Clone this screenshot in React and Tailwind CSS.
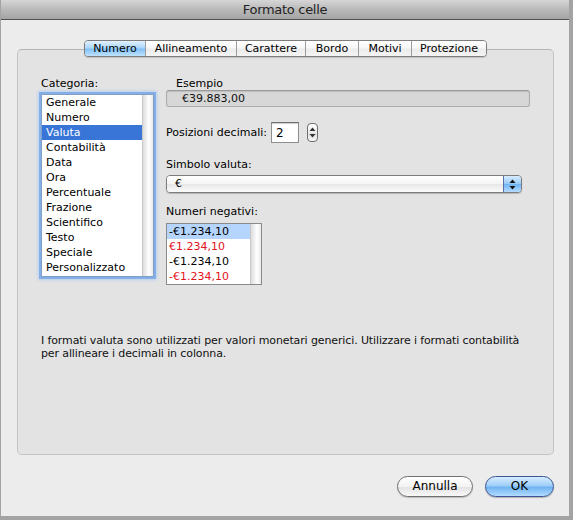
import React from 'react';

const tabs = [
  { label: 'Numero', w: 'w-[60px]', active: true },
  { label: 'Allineamento', w: 'w-[91px]' },
  { label: 'Carattere', w: 'w-[69px]' },
  { label: 'Bordo', w: 'w-[53px]' },
  { label: 'Motivi', w: 'w-[53px]' },
  { label: 'Protezione', w: 'w-[75px]' },
];

const categories = [
  'Generale', 'Numero', 'Valuta', 'Contabilità', 'Data', 'Ora',
  'Percentuale', 'Frazione', 'Scientifico', 'Testo', 'Speciale', 'Personalizzato',
];

const negatives = [
  { text: '-€1.234,10', red: false, sel: true },
  { text: '€1.234,10', red: true },
  { text: '-€1.234,10', red: false },
  { text: '-€1.234,10', red: true },
];

const UpDown = ({ className = '' }) => (
  <svg width="7" height="11" viewBox="0 0 7 11" className={className}>
    <path d="M3.5 0.5 L6.5 4 L0.5 4 Z" fill="currentColor" />
    <path d="M3.5 10.5 L6.5 7 L0.5 7 Z" fill="currentColor" />
  </svg>
);

const Track = () => (
  <div className="w-[11px] self-stretch border-l border-[#c9c9c9] bg-[linear-gradient(to_right,#dcdcdc,#f7f7f7_45%,#ffffff_60%,#e9e9e9)]" />
);

export default function App() {
  return (
    <div className="w-[573px] h-[520px] bg-[#a3a3a3] font-['DejaVu_Sans',Verdana,sans-serif] text-[11px] text-black overflow-hidden">
      <div className="ml-[1px] w-[568px] h-[516px] flex flex-col bg-[#ececec]">
        {/* title bar */}
        <div className="h-[20px] shrink-0 border-b border-[#515151] bg-[linear-gradient(to_bottom,#d6d6d6,#b9b9b9_50%,#a4a4a4)] flex items-center justify-center">
          <span className="text-[13px] leading-[19px] text-[#222] tracking-[-0.3px]">Formato celle</span>
        </div>

        <div className="flex flex-col pl-[16px] pr-[15px]">
          {/* tabs */}
          <div className="relative z-10 mt-[20px] flex justify-center">
            <div className="flex h-[17px] rounded-[4px] border border-[#7d7d7d] overflow-hidden shadow-[0_1px_1px_rgba(0,0,0,0.15)]">
              {tabs.map((t, i) => (
                <div
                  key={t.label}
                  className={`${t.w} flex items-center justify-center leading-[15px] ${i > 0 ? 'border-l border-[#9d9d9d]' : ''} ${
                    t.active
                      ? 'bg-[linear-gradient(to_bottom,#e1f1ff,#a9d6fb_48%,#80c0f6_52%,#bfe3ff)]'
                      : 'bg-[linear-gradient(to_bottom,#ffffff,#f6f6f6_48%,#ebebeb_52%,#f4f4f4)]'
                  }`}
                >
                  {t.label}
                </div>
              ))}
            </div>
          </div>

          {/* panel */}
          <div className="-mt-[8px] h-[406px] rounded-[5px] border border-[#c3c3c3] border-t-[#b5b5b5] bg-[#e3e3e3] flex flex-col pt-[25px] pl-[23px]">
            <div className="flex gap-[12px]">
              {/* categories */}
              <div className="w-[113px] flex flex-col">
                <div className="pt-[2px] leading-[14px]">Categoria:</div>
                <div className="mt-[3px] h-[183px] flex border border-[#7f9fc9] bg-white shadow-[0_0_0_2px_#84afe6,0_0_3px_3px_#b6d0f0]">
                  <div className="flex-1 flex flex-col">
                    {categories.map((c) => (
                      <div
                        key={c}
                        className={`h-[15px] leading-[15px] pl-[4px] ${c === 'Valuta' ? 'bg-[#3875d7] text-white' : ''}`}
                      >
                        {c}
                      </div>
                    ))}
                  </div>
                  <Track />
                </div>
              </div>

              {/* right side */}
              <div className="w-[364px] flex flex-col">
                <div className="pt-[2px] leading-[14px] pl-[10px]">Esempio</div>
                <div className="-mt-[1px] h-[17px] rounded-[3px] border border-[#acacac] border-t-[#999] bg-[#d7d7d7] shadow-[inset_0_1px_1px_rgba(0,0,0,0.12)] leading-[15px] pl-[15px] text-[#111]">
                  €39.883,00
                </div>

                <div className="mt-[15px] h-[21px] flex items-center">
                  <span className="w-[105px] pt-[2px]">Posizioni decimali:</span>
                  <div className="w-[28px] h-[21px] border border-[#8e8e8e] border-t-[#6f6f6f] bg-white shadow-[inset_0_1px_1px_rgba(0,0,0,0.2)] leading-[21px] pl-[4px] text-[12px]">
                    2
                  </div>
                  <div className="ml-[8px] w-[11px] h-[19px] rounded-[4px] border border-[#6e6e6e] bg-[linear-gradient(to_bottom,#ffffff,#ececec_50%,#dedede_52%,#f7f7f7)] flex items-center justify-center text-[#333]">
                    <UpDown />
                  </div>
                </div>

                <div className="mt-[13px] pt-[2px] leading-[14px]">Simbolo valuta:</div>
                <div className="mt-[3px] w-[356px] h-[18px] flex rounded-[4px] border border-[#7c7c7c] overflow-hidden shadow-[0_1px_1px_rgba(0,0,0,0.2)]">
                  <div className="flex-1 bg-[linear-gradient(to_bottom,#ffffff,#f4f4f4_50%,#e7e7e7_52%,#fbfbfb)] leading-[16px] pl-[8px]">€</div>
                  <div className="w-[18px] border-l border-[#5a6fa8] bg-[linear-gradient(to_bottom,#d8ecff,#99cbf8_48%,#6fb4f2_52%,#b5dcff)] flex items-center justify-center text-[#111]">
                    <UpDown />
                  </div>
                </div>

                <div className="mt-[10px] pt-[2px] leading-[14px]">Numeri negativi:</div>
                <div className="mt-[4px] w-[96px] h-[62px] flex border border-[#8a8a8a] bg-white">
                  <div className="flex-1 flex flex-col">
                    {negatives.map((n, i) => (
                      <div
                        key={i}
                        className={`h-[15px] leading-[15px] pl-[2px] ${n.sel ? 'bg-[#b5d5ff]' : ''} ${n.red ? 'text-[#e3121c]' : ''}`}
                      >
                        {n.text}
                      </div>
                    ))}
                  </div>
                  <Track />
                </div>
              </div>
            </div>

            <p className="mt-[49px] leading-[13px] text-[#111] tracking-[-0.12px]">
              I formati valuta sono utilizzati per valori monetari generici. Utilizzare i formati contabilità
              <br />
              per allineare i decimali in colonna.
            </p>
          </div>

          {/* buttons */}
          <div className="mt-[21px] flex justify-end gap-[12px]">
            <button className="w-[76px] h-[21px] rounded-full border border-[#6f6f6f] bg-[linear-gradient(to_bottom,#ffffff,#f3f3f3_50%,#e2e2e2_52%,#f8f8f8)] shadow-[0_1px_1px_rgba(0,0,0,0.2)] text-[12px] leading-[19px]">
              Annulla
            </button>
            <button className="w-[69px] h-[21px] rounded-full border border-[#3f5494] bg-[linear-gradient(to_bottom,#d6ecff,#9ccdf8_48%,#6db2f1_52%,#b2dcff)] shadow-[0_1px_1px_rgba(0,0,0,0.25)] text-[12px] leading-[19px]">
              OK
            </button>
          </div>
        </div>
      </div>
    </div>
  );
}
